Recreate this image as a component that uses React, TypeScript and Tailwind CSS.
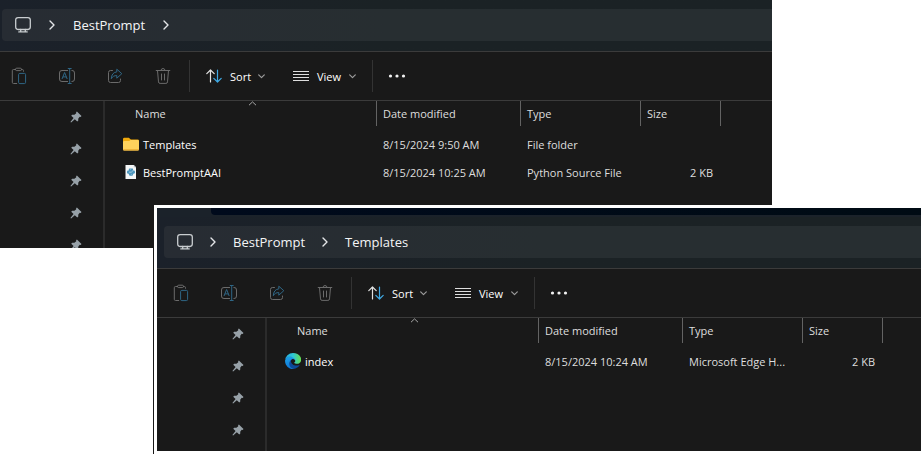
import type { ReactNode } from "react";

type FileKind = "folder" | "python" | "edge";

interface FileRow {
  name: string;
  kind: FileKind;
  modified: string;
  type: string;
  size: string;
}

function MonitorIcon() {
  return (
    <svg width="16" height="16" viewBox="0 0 16 16" fill="none" stroke="#c9cdd0" strokeWidth="1.300">
      <rect x="0.700" y="0.700" width="14.600" height="11.800" rx="2.400" />
      <path d="M5.700 12.500v2.300M10.300 12.500v2.300M3.800 14.900h8.400" strokeLinecap="round" />
    </svg>
  );
}

function Crumb() {
  return (
    <svg width="6" height="10" viewBox="0 0 6 10" fill="none" stroke="#e4e6e8" strokeWidth="1.400">
      <path d="M1 1l4 4-4 4" strokeLinecap="round" strokeLinejoin="round" />
    </svg>
  );
}

function ChevronDown() {
  return (
    <svg width="7" height="5" viewBox="0 0 7 5" fill="none" stroke="#9c9c9c" strokeWidth="1.200">
      <path d="M0.700 0.900l2.800 2.800 2.800-2.800" strokeLinecap="round" strokeLinejoin="round" />
    </svg>
  );
}

function PasteIcon() {
  return (
    <svg width="16" height="18" viewBox="0 0 16 18" fill="none" strokeWidth="1">
      <path d="M5 2.500H2.500a1.200 1.200 0 0 0-1.200 1.200v11.600a1.200 1.200 0 0 0 1.200 1.200h3.600M10 2.500h1.300a1.200 1.200 0 0 1 1.200 1.200v1" stroke="#6b6b6b" />
      <rect x="4.500" y="1.200" width="6" height="2.400" rx="1.200" stroke="#6b6b6b" />
      <rect x="7.600" y="6.400" width="7" height="10.200" rx="1.200" stroke="#2f6685" />
    </svg>
  );
}

function RenameIcon() {
  return (
    <svg width="18" height="18" viewBox="0 0 18 18" fill="none" strokeWidth="1">
      <path d="M10 3.500H4A2.400 2.400 0 0 0 1.500 6v6A2.400 2.400 0 0 0 4 14.500h6M13.500 3.500h.5A2.400 2.400 0 0 1 16.500 6v6a2.400 2.400 0 0 1-2.500 2.500h-.5" stroke="#6b6b6b" />
      <path d="M4 12l2.600-6.500L9.200 12M4.900 9.900h3.400M11.700 1.800v14.400M9.800 1.500h3.800M9.800 16.500h3.800" stroke="#2f6685" />
    </svg>
  );
}

function ShareIcon() {
  return (
    <svg width="16" height="16" viewBox="0 0 16 16" fill="none" strokeWidth="1" strokeLinejoin="round">
      <path d="M5.500 2.500H3.500a2 2 0 0 0-2 2v8a2 2 0 0 0 2 2h8a2 2 0 0 0 2-2v-1.500" stroke="#6b6b6b" strokeLinecap="round" />
      <path d="M9.800 1.200l5 4.500-5 4.500V7.600C7.300 7.500 5.600 8.500 4.300 10.700c.1-3.800 2-6.500 5.500-6.800z" stroke="#2f6685" />
    </svg>
  );
}

function TrashIcon() {
  return (
    <svg width="16" height="18" viewBox="0 0 16 18" fill="none" stroke="#6b6b6b" strokeWidth="1" strokeLinecap="round">
      <path d="M1.200 3.500h13.600M6 3.500a2 2 0 0 1 4 0M2.500 3.500l1 11.400a1.600 1.600 0 0 0 1.600 1.500h5.800a1.600 1.600 0 0 0 1.600-1.500l1-11.400M6.500 7v6M9.500 7v6" />
    </svg>
  );
}

function SortIcon() {
  return (
    <svg width="16" height="14" viewBox="0 0 16 14" fill="none" strokeWidth="1.200" strokeLinecap="round" strokeLinejoin="round">
      <path d="M4.500 13V1M0.800 4.700L4.500 1l3.700 3.700" stroke="#e2e2e2" />
      <path d="M11.500 1v12M7.800 9.300l3.700 3.700 3.700-3.700" stroke="#3fa9e4" />
    </svg>
  );
}

function ViewIcon() {
  return (
    <svg width="16" height="12" viewBox="0 0 16 12" stroke="#dedede" strokeWidth="1">
      <path d="M0 1.500h16M0 4.500h16M0 7.500h16M0 10.500h16" />
    </svg>
  );
}

function PinIcon() {
  return (
    <svg width="12" height="12" viewBox="0 0 12 12" fill="#97a1a8">
      <path d="M6.900 0.600l4.600 4.400-.8.900-1-.1-1.500 1.900.1 1.900-1 1L4.800 8.300 1.100 11.600l-.7-.6L3.600 7.100 1.200 4.700l1-1 2.200.1L6.300 2.300 6.100 1.300z" />
    </svg>
  );
}

function FolderIcon() {
  return (
    <svg width="16" height="14" viewBox="0 0 16 14">
      <path d="M0 2.200A1.400 1.400 0 0 1 1.400.8h3.800c.5 0 .8.100 1.200.5L7.900 2.600h6.700A1.400 1.400 0 0 1 16 4v3H0z" fill="#f0a90c" />
      <path d="M0 5.200a1.200 1.200 0 0 1 1.200-1.200h4.400c.5 0 .9-.1 1.300-.5l.6-.5h7.300A1.200 1.200 0 0 1 16 4.200v8.100a1.200 1.200 0 0 1-1.200 1.200H1.200A1.200 1.200 0 0 1 0 12.300z" fill="#ffd25c" />
      <path d="M0 12.300a1.200 1.200 0 0 0 1.200 1.200h13.600a1.200 1.200 0 0 0 1.200-1.200v-.4H0z" fill="#edb33a" />
    </svg>
  );
}

function PythonFileIcon() {
  return (
    <svg width="16" height="14" viewBox="0 0 16 14">
      <path d="M2.500 0h8.300L13 2.200V14H2.500z" fill="#f4f6f7" />
      <path d="M10.800 0L13 2.200h-2.200z" fill="#b9c2c8" />
      <path d="M6.500 3.500h2.600c.8 0 1 .5 1 1v.9h.7c.9 0 1.200.6 1.200 1.600s-.4 1.700-1.200 1.700h-.7v.9c0 .6-.3 1.100-1.100 1.100H7c-.7 0-1.100-.4-1.100-1.100v-.9h-.8C4.300 8.700 4 8 4 7s.3-1.600 1.100-1.600h.7v-.9c0-.6.2-1 .7-1z" fill="#4a95bd" />
      <path d="M5.900 7.200h2.400l1.700-1.600M7 4.500h.6M8.500 9.500h.6" stroke="#d6e8f0" strokeWidth="0.600" fill="none" />
    </svg>
  );
}

function EdgeIcon() {
  return (
    <svg width="16" height="16" viewBox="0 0 256 256">
      <defs>
        <linearGradient id="edgeTop" x1="0" y1="0.500" x2="1" y2="0.500">
          <stop offset="0" stopColor="#22a9e6" />
          <stop offset="0.500" stopColor="#2fc8d4" />
          <stop offset="1" stopColor="#66e04c" />
        </linearGradient>
        <linearGradient id="edgeLeft" x1="0.300" y1="0" x2="0.500" y2="1">
          <stop offset="0" stopColor="#1ea2e8" />
          <stop offset="1" stopColor="#0d74d6" />
        </linearGradient>
      </defs>
      <path d="M231 190a93 93 0 0 1-11 5 102 102 0 0 1-36 6c-47 0-89-33-89-75a32 32 0 0 1 17-27c-43 2-54 46-54 72 0 74 68 81 82 81 8 0 20-2 27-4l1-1a128 128 0 0 0 67-53 4 4 0 0 0-4-4z" fill="#0c4a9a" />
      <path d="M106 241a79 79 0 0 1-23-21 81 81 0 0 1 29-120c3-2 9-4 16-4a34 34 0 0 1 27 13 34 34 0 0 1 7 20c0 0 25-79-80-79-44 0-81 42-81 78a130 130 0 0 0 12 56 128 128 0 0 0 156 67 75 75 0 0 1-63-10z" fill="url(#edgeLeft)" />
      <path d="M152 149c-1 1-3 2-3 6 0 2 2 5 5 8 15 10 43 9 43 9a61 61 0 0 0 31-9 63 63 0 0 0 31-54c0-23-8-38-11-45C227 24 180 0 128 0A128 128 0 0 0 0 126c0-36 37-66 81-66 4 0 24 1 43 11a75 75 0 0 1 32 30c7 11 8 25 8 31s-3 14-12 17z" fill="url(#edgeTop)" />
    </svg>
  );
}

function FileIcon({ kind }: { kind: FileKind }) {
  if (kind === "folder") return <FolderIcon />;
  if (kind === "python") return <PythonFileIcon />;
  return <EdgeIcon />;
}

function ToolButton({ label, children }: { label: string; children: ReactNode }) {
  return (
    <button type="button" aria-label={label} className="flex h-8 w-12 items-center justify-center">
      {children}
    </button>
  );
}

function AddressBar({ path }: { path: string[] }) {
  const nested = path.length > 1;
  const crumbBox = nested ? "flex w-10 justify-center" : "flex w-[42px] justify-center";
  return (
    <div className="bg-linear-to-r from-[#1b212a] to-[#1b2225] to-50% pb-[10px] pl-[7px] pt-[9px]">
      <nav
        aria-label="Path"
        className="flex h-8 items-center rounded-l bg-linear-to-r from-[#272c33] to-[#272e31] to-50% pl-[13px] text-[13px] text-[#f4f5f6]"
      >
        <MonitorIcon />
        <ul className="flex items-center">
          {path.map((part) => (
            <li key={part} className="flex items-center">
              <span className={crumbBox}>
                <Crumb />
              </span>
              <a href="#" className="pt-[2px]">{part}</a>
            </li>
          ))}
        </ul>
        {!nested && (
          <span className={crumbBox}>
            <Crumb />
          </span>
        )}
      </nav>
    </div>
  );
}

function Toolbar() {
  return (
    <div className="flex h-[50px] items-center border-y border-[#3b3b3b] text-[11px] text-white">
      <ToolButton label="Paste"><PasteIcon /></ToolButton>
      <ToolButton label="Rename"><RenameIcon /></ToolButton>
      <ToolButton label="Share"><ShareIcon /></ToolButton>
      <ToolButton label="Delete"><TrashIcon /></ToolButton>
      <span className="ml-[2px] h-8 w-px bg-[#333333]" />
      <button type="button" className="ml-4 flex items-center text-left">
        <SortIcon />
        <span className="ml-2 w-7 pt-[2px]">Sort</span>
        <ChevronDown />
      </button>
      <button type="button" className="ml-7 flex items-center text-left">
        <ViewIcon />
        <span className="ml-2 w-8 pt-[2px]">View</span>
        <ChevronDown />
      </button>
      <span className="ml-4 h-8 w-px bg-[#333333]" />
      <ToolButton label="More">
        <svg width="18" height="4" viewBox="0 0 18 4" fill="#f2f2f2">
          <circle cx="2.500" cy="2" r="1.600" />
          <circle cx="9" cy="2" r="1.600" />
          <circle cx="15.500" cy="2" r="1.600" />
        </svg>
      </ToolButton>
    </div>
  );
}

function HeaderCell({ label }: { label: string }) {
  return (
    <th scope="col" className="p-0 text-left align-top font-normal">
      <div className="flex h-[25px] items-center border-r border-[#636363] pl-[6px] pt-[2px]">{label}</div>
    </th>
  );
}

function FileTable({ files }: { files: FileRow[] }) {
  return (
    <table className="w-full table-fixed self-start text-[11px] text-[#dedede]">
      <colgroup>
        <col className="w-[272px]" />
        <col className="w-[144px]" />
        <col className="w-[120px]" />
        <col className="w-[80px]" />
        <col />
      </colgroup>
      <thead>
        <tr className="h-[30px]">
          <th scope="col" aria-sort="ascending" className="p-0 text-left align-top font-normal">
            <div className="relative flex h-[25px] items-center border-r border-[#636363] pl-[30px] pt-[2px]">
              Name
              <svg className="absolute left-[143px] top-0" width="9" height="5" viewBox="0 0 9 5" fill="none" stroke="#a6a6a6">
                <path d="M1 4.200L4.500 0.900 8 4.200" />
              </svg>
            </div>
          </th>
          <HeaderCell label="Date modified" />
          <HeaderCell label="Type" />
          <HeaderCell label="Size" />
          <td className="p-0" />
        </tr>
      </thead>
      <tbody>
        {files.map((file) => (
          <tr key={file.name} className="h-7">
            <td className="p-0">
              <div className="flex items-center pl-[18px] text-white">
                <span className="flex w-5 shrink-0 pb-[2px]">
                  <FileIcon kind={file.kind} />
                </span>
                {file.name}
              </div>
            </td>
            <td className="whitespace-nowrap p-0 pl-[6px]">{file.modified}</td>
            <td className="whitespace-nowrap p-0 pl-[6px]">{file.type}</td>
            <td className="p-0 pr-[8px] text-right">{file.size}</td>
            <td className="p-0" />
          </tr>
        ))}
      </tbody>
    </table>
  );
}

function Explorer({ path, files, pins }: { path: string[]; files: FileRow[]; pins: number }) {
  return (
    <div className="flex min-h-0 flex-1 flex-col">
      <AddressBar path={path} />
      <Toolbar />
      <div className="flex min-h-0 flex-1 overflow-hidden">
        <aside className="w-[108px] shrink-0">
          {Array.from({ length: pins }, (_, i) => (
            <div key={i} className="flex h-8 items-center justify-end pr-[21px]">
              <PinIcon />
            </div>
          ))}
        </aside>
        <div className="w-[2px] shrink-0 bg-[#2b2b2b]" />
        <FileTable files={files} />
      </div>
    </div>
  );
}

const rootFiles: FileRow[] = [
  { name: "Templates", kind: "folder", modified: "8/15/2024 9:50 AM", type: "File folder", size: "" },
  { name: "BestPromptAAI", kind: "python", modified: "8/15/2024 10:25 AM", type: "Python Source File", size: "2 KB" },
];

const templateFiles: FileRow[] = [
  { name: "index", kind: "edge", modified: "8/15/2024 10:24 AM", type: "Microsoft Edge H...", size: "2 KB" },
];

export default function App() {
  return (
    <main className="min-h-screen overflow-hidden bg-white font-['Open_Sans','Noto_Sans',sans-serif]">
      <section aria-label="BestPrompt" className="mr-[152px] flex h-[248px] overflow-hidden bg-[#191919]">
        <div className="-ml-[5px] flex min-w-0 flex-1">
          <Explorer path={["BestPrompt"]} files={rootFiles} pins={5} />
        </div>
      </section>
      <section
        aria-label="Templates"
        className="relative -mt-[43px] ml-[153px] h-[249px] border-l border-[#191919] bg-white p-[3px]"
      >
        <div className="flex h-full flex-col overflow-hidden bg-[#191919]">
          <div className="flex h-[9px] shrink-0 bg-[#1b222a]">
            <span className="w-[54px]" />
            <span className="h-[7px] flex-1 rounded-bl bg-linear-to-r from-[#000a1c] to-[#000b14]" />
          </div>
          <Explorer path={["BestPrompt", "Templates"]} files={templateFiles} pins={4} />
        </div>
      </section>
    </main>
  );
}
